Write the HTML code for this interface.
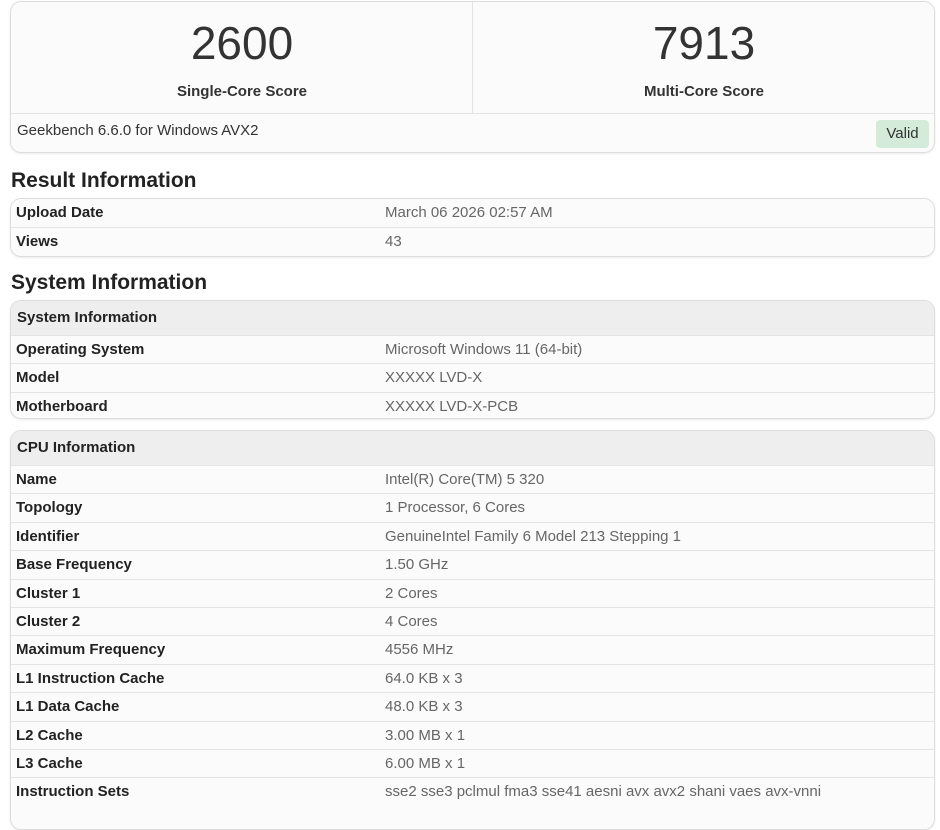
<!DOCTYPE html>
<html><head><style>
*{box-sizing:border-box;margin:0;padding:0}
body{width:940px;height:805px;overflow:hidden;background:#fff;font-family:"Liberation Sans",Arial,sans-serif;color:#222;position:relative}
.card{position:absolute;left:10px;width:925px;border:1px solid #ddd;border-radius:11px;background:#fbfbfb;overflow:hidden;box-shadow:0 1px 2px rgba(0,0,0,.08)}
.num{position:absolute;top:14px;width:462px;text-align:center;font-size:46px;color:#333}
.lab{position:absolute;top:81px;width:462px;text-align:center;font-size:15px;font-weight:bold;color:#333}
h2{position:absolute;left:11px;font-size:21px;font-weight:bold;color:#222}
.row{height:28.4px;border-top:1px solid #e4e4e4;position:relative;font-size:15px;line-height:27px}
.row:first-child{border-top:none}
.row .k{position:absolute;left:5px;font-weight:bold;color:#222}
.row .v{position:absolute;left:374px;color:#666}
.hd{height:34px;background:#eee;font-weight:bold;font-size:15px;line-height:34px;padding-left:6px;color:#222}
</style></head><body>
<div class="card" style="top:1px;height:152px">
 <div class="num" style="left:0">2600</div>
 <div class="lab" style="left:0">Single-Core Score</div>
 <div style="position:absolute;left:461px;top:0;height:111px;border-left:1px solid #e4e4e4"></div>
 <div class="num" style="left:462px">7913</div>
 <div class="lab" style="left:462px">Multi-Core Score</div>
 <div style="position:absolute;left:0;right:0;top:111px;border-top:1px solid #e4e4e4"></div>
 <div style="position:absolute;left:6px;top:120px;font-size:15px;color:#333">Geekbench 6.6.0 for Windows AVX2</div>
 <div style="position:absolute;left:865px;top:118px;width:53px;height:28px;background:#d4ebd9;border-radius:4px;font-size:15px;line-height:28px;text-align:center;color:#333">Valid</div>
</div>
<h2 style="top:169px">Result Information</h2>
<div class="card" style="top:198px;height:59px">
 <div class="row"><span class="k">Upload Date</span><span class="v">March 06 2026 02:57 AM</span></div>
 <div class="row"><span class="k">Views</span><span class="v">43</span></div>
</div>
<h2 style="top:271px">System Information</h2>
<div class="card" style="top:300px;height:119px">
 <div class="hd">System Information</div>
 <div class="row"><span class="k">Operating System</span><span class="v">Microsoft Windows 11 (64-bit)</span></div>
 <div class="row"><span class="k">Model</span><span class="v">XXXXX LVD-X</span></div>
 <div class="row"><span class="k">Motherboard</span><span class="v">XXXXX LVD-X-PCB</span></div>
</div>
<div class="card" style="top:430px;height:400px">
 <div class="hd">CPU Information</div>
 <div class="row"><span class="k">Name</span><span class="v">Intel(R) Core(TM) 5 320</span></div>
 <div class="row"><span class="k">Topology</span><span class="v">1 Processor, 6 Cores</span></div>
 <div class="row"><span class="k">Identifier</span><span class="v">GenuineIntel Family 6 Model 213 Stepping 1</span></div>
 <div class="row"><span class="k">Base Frequency</span><span class="v">1.50 GHz</span></div>
 <div class="row"><span class="k">Cluster 1</span><span class="v">2 Cores</span></div>
 <div class="row"><span class="k">Cluster 2</span><span class="v">4 Cores</span></div>
 <div class="row"><span class="k">Maximum Frequency</span><span class="v">4556 MHz</span></div>
 <div class="row"><span class="k">L1 Instruction Cache</span><span class="v">64.0 KB x 3</span></div>
 <div class="row"><span class="k">L1 Data Cache</span><span class="v">48.0 KB x 3</span></div>
 <div class="row"><span class="k">L2 Cache</span><span class="v">3.00 MB x 1</span></div>
 <div class="row"><span class="k">L3 Cache</span><span class="v">6.00 MB x 1</span></div>
 <div class="row"><span class="k">Instruction Sets</span><span class="v">sse2 sse3 pclmul fma3 sse41 aesni avx avx2 shani vaes avx-vnni</span></div>
</div>
</body></html>
